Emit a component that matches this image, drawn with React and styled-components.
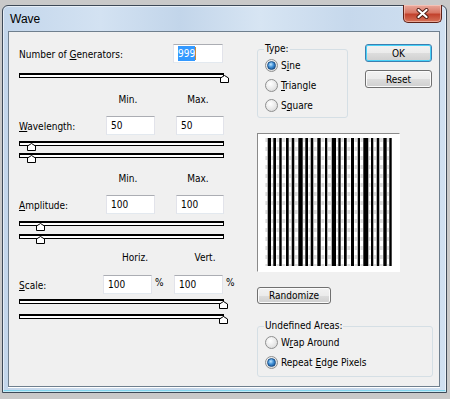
import React from 'react';
import styled, { createGlobalStyle } from 'styled-components';

const GlobalStyle = createGlobalStyle`
  html, body {
    margin: 0;
    padding: 0;
  }
  body {
    background: #c9c9c9;
    font-family: 'DejaVu Sans Condensed', 'Liberation Sans', sans-serif;
    font-size: 10px;
    color: #000;
  }
  * {
    box-sizing: border-box;
  }
`;

const Desktop = styled.div`
  width: 450px;
  height: 399px;
  padding: 5px 3px 0 2px;
  background: #c9c9c9;
  overflow: hidden;
`;

const Window = styled.div`
  width: 445px;
  height: 388px;
  display: flex;
  flex-direction: column;
  padding: 0 6px 5px 5px;
  border: 1px solid #3d4957;
  border-radius: 6px 6px 0 0;
  background: linear-gradient(90deg, #c3d6eb 0%, #d3e2f2 22%, #c2d5ea 40%, #d7e5f3 58%, #c6d8ec 78%, #d0e0f1 100%);
  box-shadow: inset 0 0 0 1px rgba(255, 255, 255, 0.55), inset 0 -2px 0 #7fd3ec;
`;

const TitleBar = styled.div`
  height: 25px;
  display: flex;
  justify-content: space-between;
  align-items: flex-start;
`;

const Title = styled.span`
  padding: 6px 0 0 2px;
  font-family: 'Liberation Sans', sans-serif;
  font-size: 12px;
  line-height: 14px;
  color: #000;
`;

const CloseButton = styled.div`
  width: 39px;
  height: 18px;
  margin: -1px -2px 0 0;
  display: flex;
  align-items: center;
  justify-content: center;
  border: 1px solid #5e2118;
  border-top: none;
  border-radius: 0 0 5px 5px;
  background: linear-gradient(180deg, #e9a99c 0%, #d87866 45%, #c2422d 55%, #d6735a 100%);
  box-shadow: inset 0 0 0 1px rgba(255, 220, 210, 0.5);
`;

const Client = styled.div`
  flex: 1;
  display: flex;
  padding: 12px 0 0 10px;
  border: 1px solid #6f7f8e;
  background: #f0f0f0;
  box-shadow: 0 1px 0 #ffffff;
`;

const LeftCol = styled.div`
  width: 216px;
  display: flex;
  flex-direction: column;
`;

const RightCol = styled.div`
  width: 176px;
  margin: -1px 0 0 22px;
  display: flex;
  flex-direction: column;
`;

const Row = styled.div`
  height: 19px;
  margin-top: ${p => p.$mt || 0}px;
  display: grid;
  grid-template-columns: ${p => p.$cols};
  align-items: center;
`;

const Label = styled.span`
  white-space: nowrap;
  line-height: 13px;
  padding-top: 1px;
`;

const HeaderRow = styled.div`
  height: 13px;
  margin-top: ${p => p.$mt || 0}px;
  display: grid;
  grid-template-columns: ${p => p.$cols};
  line-height: 13px;
`;

const HeaderCell = styled.span`
  text-align: center;
`;

const TextBox = styled.div`
  height: 19px;
  padding: 0 0 0 4px;
  display: flex;
  align-items: center;
  background: #fff;
  border: 1px solid #e2e3ea;
  border-top-color: #abadb3;
  border-bottom-color: #e3e9ef;
  white-space: nowrap;
`;

const Selected = styled.span`
  background: #3399ff;
  color: #fff;
  padding: 1px 0;
  line-height: 13px;
`;

const Caret = styled.span`
  width: 1px;
  height: 13px;
  background: #c98a3a;
`;

const Percent = styled.span`
  padding-left: 3px;
  line-height: 13px;
  align-self: start;
  padding-top: 1px;
`;

const SliderBox = styled.div`
  position: relative;
  width: 205px;
  height: 10px;
  margin-top: ${p => p.$mt || 0}px;
`;

const Track = styled.div`
  height: 5px;
  background: #fff;
  border: 1px solid #000;
  border-top-width: 2px;
`;

const Thumb = styled.svg`
  position: absolute;
  top: 2px;
  left: ${p => p.$left}px;
  width: 9px;
  height: 8px;
`;

const Slider = ({ left, mt }) => (
  <SliderBox $mt={mt}>
    <Track />
    <Thumb $left={left} viewBox="0 0 9 8">
      <polygon points="0.5,3 4.5,0.5 8.5,3 8.5,7.5 0.5,7.5" fill="#fff" stroke="#000" strokeWidth="1" />
    </Thumb>
  </SliderBox>
);

const TopRow = styled.div`
  display: flex;
  align-items: flex-start;
`;

const GroupBox = styled.fieldset`
  width: ${p => p.$w}px;
  margin: ${p => p.$mt || 0}px 0 0 0;
  padding: 0 0 ${p => p.$pb}px 7px;
  border: 1px solid #d5dfe5;
  border-radius: 3px;
  min-width: 0;
`;

const Legend = styled.legend`
  padding: 0 1px;
  margin-left: -1px;
  line-height: 12px;
`;

const RadioRow = styled.div`
  height: 20px;
  display: flex;
  align-items: center;
  gap: 3px;
`;

const RadioDot = styled.span`
  width: 13px;
  height: 13px;
  border-radius: 50%;
  display: flex;
  align-items: center;
  justify-content: center;
  border: 1px solid #8e8f8f;
  background: radial-gradient(circle at 40% 35%, #ffffff 0%, #e6e6e6 60%, #cfcfcf 100%);
  &::after {
    content: '';
    display: ${p => (p.$on ? 'block' : 'none')};
    width: 7px;
    height: 7px;
    border-radius: 50%;
    border: 1px solid #1a4f86;
    background: radial-gradient(circle at 40% 35%, #bfe6ff 0%, #3f8fd6 45%, #0c3f7c 100%);
  }
`;

const Radio = ({ on, children }) => (
  <RadioRow>
    <RadioDot $on={on} />
    <span>{children}</span>
  </RadioRow>
);

const ButtonCol = styled.div`
  margin: 1px 0 0 17px;
  display: flex;
  flex-direction: column;
  gap: 8px;
`;

const Button = styled.div`
  width: ${p => p.$w}px;
  height: ${p => p.$h || 18}px;
  margin-top: ${p => p.$mt || 0}px;
  display: flex;
  align-items: center;
  justify-content: center;
  border: 1px solid ${p => (p.$default ? '#3c7fb1' : '#707070')};
  border-radius: 3px;
  background: linear-gradient(180deg, #f2f2f2 0%, #ebebeb 50%, #dddddd 51%, #cfcfcf 100%);
  box-shadow: inset 0 0 0 1px ${p => (p.$default ? '#48d2f8' : '#fbfbfb')};
`;

const Preview = styled.div`
  width: 143px;
  height: 139px;
  margin-top: 15px;
  padding: 4px 0 0 7px;
  background: #fff;
  border: 1px solid #fff;
  border-top-color: #8a8a8a;
  border-left-color: #8a8a8a;
`;

const bars = [
  [267.7, 271], [273.3, 276], [279.3, 281.7], [286, 288.7], [291.7, 294.3],
  [298.3, 302.7], [305.3, 308], [310.7, 313.3], [317.3, 320.7], [325, 327.3],
  [331.7, 336], [338.3, 340.7], [344, 346.7], [351, 354], [357.7, 360],
  [363.3, 368.3], [371, 373.3], [376.7, 379.3], [383.3, 386.7], [389.3, 391.7],
];

const WavePreview = () => {
  const x0 = 265;
  const gaps = [[265, 267.7]].concat(bars.slice(0, -1).map((b, i) => [b[1], bars[i + 1][0]]));
  return (
    <svg width="128" height="128" viewBox="0 0 128 128" style={{ display: 'block' }}>
      {gaps.map(([a, b], i) => (
        <line
          key={'g' + i}
          x1={(a + b) / 2 - x0}
          x2={(a + b) / 2 - x0}
          y1="0"
          y2="128"
          stroke="#dcdcdc"
          strokeWidth={Math.max(1, (b - a) * 0.7)}
          strokeDasharray="4 5"
        />
      ))}
      {bars.map(([a, b], i) => (
        <rect key={i} x={a - x0} y="0" width={b - a} height="128" fill="#000" />
      ))}
    </svg>
  );
};

const App = () => (
  <>
    <GlobalStyle />
    <Desktop>
      <Window>
        <TitleBar>
          <Title>Wave</Title>
          <CloseButton>
            <svg width="13" height="11" viewBox="0 0 13 11">
              <path d="M2.5 2 L10.5 9 M10.5 2 L2.5 9" stroke="#4a1a12" strokeWidth="4" strokeLinecap="round" />
              <path d="M2.5 2 L10.5 9 M10.5 2 L2.5 9" stroke="#fff" strokeWidth="2.2" strokeLinecap="round" />
            </svg>
          </CloseButton>
        </TitleBar>
        <Client>
          <LeftCol>
            <Row $cols="154px 50px">
              <Label>Number of <u>G</u>enerators:</Label>
              <TextBox>
                <Selected>999</Selected>
                <Caret />
              </TextBox>
            </Row>
            <Slider left={201} mt={10} />

            <HeaderRow $cols="85px 48px 22px 48px" $mt={10}>
              <span />
              <HeaderCell>Min.</HeaderCell>
              <span />
              <HeaderCell>Max.</HeaderCell>
            </HeaderRow>
            <Row $cols="87px 49px 21px 48px" $mt={10}>
              <Label><u>W</u>avelength:</Label>
              <TextBox>50</TextBox>
              <span />
              <TextBox>50</TextBox>
            </Row>
            <Slider left={8} mt={6} />
            <Slider left={8} mt={2} />

            <HeaderRow $cols="85px 48px 22px 48px" $mt={9}>
              <span />
              <HeaderCell>Min.</HeaderCell>
              <span />
              <HeaderCell>Max.</HeaderCell>
            </HeaderRow>
            <Row $cols="87px 49px 21px 48px" $mt={10}>
              <Label><u>A</u>mplitude:</Label>
              <TextBox>100</TextBox>
              <span />
              <TextBox>100</TextBox>
            </Row>
            <Slider left={17} mt={7} />
            <Slider left={17} mt={3} />

            <HeaderRow $cols="92px 48px 22px 48px" $mt={7}>
              <span />
              <HeaderCell>Horiz.</HeaderCell>
              <span />
              <HeaderCell>Vert.</HeaderCell>
            </HeaderRow>
            <Row $cols="84px 49px 22px 49px auto" $mt={11}>
              <Label><u>S</u>cale:</Label>
              <TextBox>100</TextBox>
              <Percent>%</Percent>
              <TextBox>100</TextBox>
              <Percent>%</Percent>
            </Row>
            <Slider left={200} mt={5} />
            <Slider left={200} mt={5} />
          </LeftCol>

          <RightCol>
            <TopRow>
              <GroupBox $w={91} $pb={2}>
                <Legend>Type:</Legend>
                <Radio on>S<u>i</u>ne</Radio>
                <Radio><u>T</u>riangle</Radio>
                <Radio>S<u>q</u>uare</Radio>
              </GroupBox>
              <ButtonCol>
                <Button $w={67} $default>OK</Button>
                <Button $w={67}>Reset</Button>
              </ButtonCol>
            </TopRow>

            <Preview>
              <WavePreview />
            </Preview>

            <Button $w={74} $h={17} $mt={15}>Randomize</Button>

            <GroupBox $w={176} $mt={16} $pb={4}>
              <Legend>Undefined Areas:</Legend>
              <Radio>W<u>r</u>ap Around</Radio>
              <Radio on>Repeat <u>E</u>dge Pixels</Radio>
            </GroupBox>
          </RightCol>
        </Client>
      </Window>
    </Desktop>
  </>
);

export default App;
